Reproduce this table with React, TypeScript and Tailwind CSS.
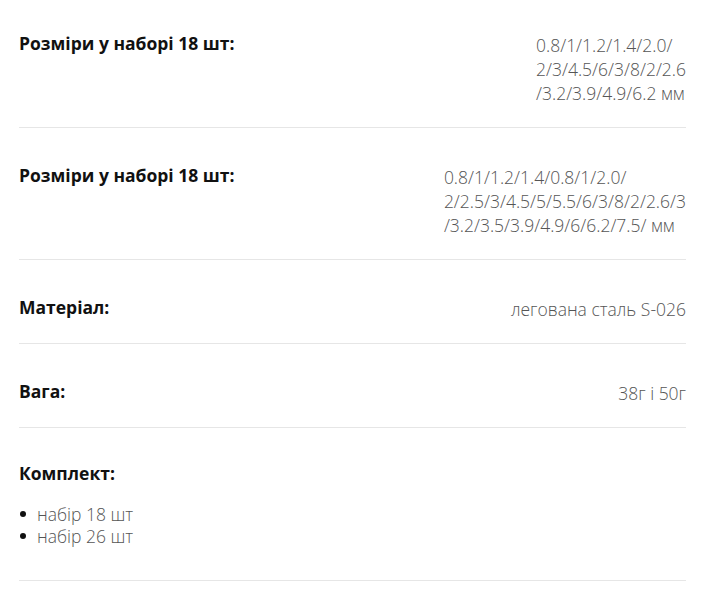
type Spec = {
  label: string;
  lines: string[];
};

const specs: Spec[] = [
  {
    label: 'Розміри у наборі 18 шт:',
    lines: ['0.8/1/1.2/1.4/2.0/', '2/3/4.5/6/3/8/2/2.6', '/3.2/3.9/4.9/6.2 мм'],
  },
  {
    label: 'Розміри у наборі 18 шт:',
    lines: ['0.8/1/1.2/1.4/0.8/1/2.0/', '2/2.5/3/4.5/5/5.5/6/3/8/2/2.6/3', '/3.2/3.5/3.9/4.9/6/6.2/7.5/ мм'],
  },
  { label: 'Матеріал:', lines: ['легована сталь S-026'] },
  { label: 'Вага:', lines: ['38г і 50г'] },
];

const kit = ['набір 18 шт', 'набір 26 шт'];

export default function App() {
  return (
    <div className="min-h-[603px] bg-white font-['Open_Sans',sans-serif]">
      <div className="ml-[19px] w-[667px] -mt-[4px]">
        {specs.map((spec, i) => (
          <div
            key={i}
            className="flex items-start justify-between border-b border-[#e6e6e6] pt-[35px] pb-[22px] text-[17.5px] leading-[24px]"
          >
            <div className="font-bold text-[#111]">{spec.label}</div>
            <div className="mt-[2px] text-left font-light text-[#555]">
              {spec.lines.map((line) => (
                <div key={line}>{line}</div>
              ))}
            </div>
          </div>
        ))}
        <div className="border-b border-[#e6e6e6] pt-[33px] pb-[33px] text-[17.5px]">
          <div className="font-bold leading-[24px] text-[#111]">Комплект:</div>
          <ul className="mt-[18px]">
            {kit.map((item) => (
              <li key={item} className="flex items-center leading-[22px]">
                <span className="ml-[1px] mr-[11px] h-[6px] w-[6px] rounded-full bg-[#111]" />
                <span className="font-light text-[#555]">{item}</span>
              </li>
            ))}
          </ul>
        </div>
      </div>
    </div>
  );
}
